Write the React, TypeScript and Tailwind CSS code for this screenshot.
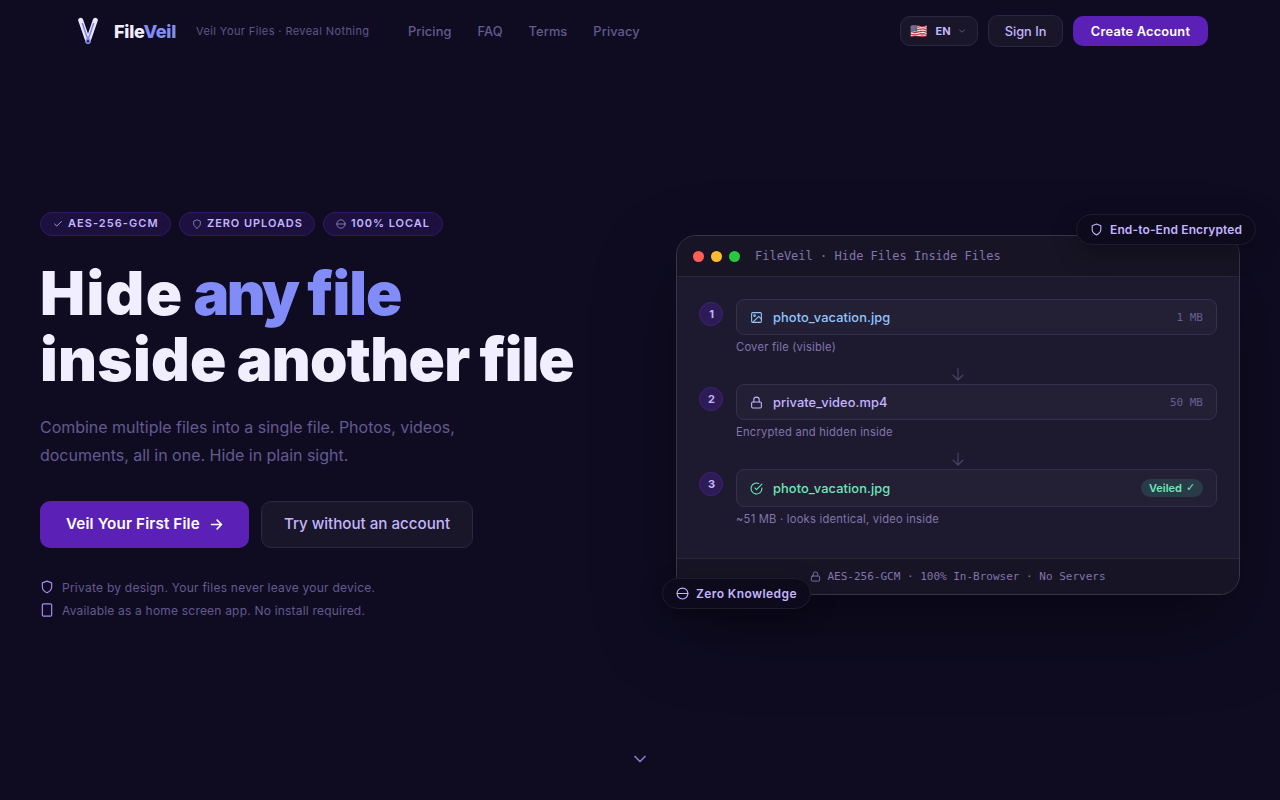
import type { ReactNode } from "react";

type GlyphProps = { className?: string; width?: number };

function Glyph({ className = "", width = 2, children }: GlyphProps & { children: ReactNode }) {
  return (
    <svg viewBox="0 0 24 24" fill="none" stroke="currentColor" strokeWidth={width} strokeLinecap="round" strokeLinejoin="round" className={`shrink-0 ${className}`}>
      {children}
    </svg>
  );
}

const Shield = (p: GlyphProps) => (
  <Glyph {...p}><path d="M12 22s8-4 8-10V5l-8-3-8 3v7c0 6 8 10 8 10z" /></Glyph>
);
const Disc = (p: GlyphProps) => (
  <Glyph {...p}><circle cx="12" cy="12" r="10" /><path d="M2 12h20" /></Glyph>
);
const Lock = (p: GlyphProps) => (
  <Glyph {...p}><rect x="3" y="11" width="18" height="11" rx="2" /><path d="M7 11V7a5 5 0 0 1 10 0v4" /></Glyph>
);
const Check = (p: GlyphProps) => (
  <Glyph {...p}><path d="M20 6 9 17l-5-5" /></Glyph>
);
const Chevron = (p: GlyphProps) => (
  <Glyph {...p}><path d="m6 9 6 6 6-6" /></Glyph>
);
const Picture = (p: GlyphProps) => (
  <Glyph {...p}><rect x="3" y="3" width="18" height="18" rx="2" /><circle cx="8.5" cy="8.5" r="1.5" /><path d="m21 15-5-5L5 21" /></Glyph>
);
const CheckCircle = (p: GlyphProps) => (
  <Glyph {...p}><path d="M22 11.08V12a10 10 0 1 1-5.93-9.14" /><path d="M22 4 12 14.01l-3-3" /></Glyph>
);

function Logo() {
  return (
    <svg viewBox="0 0 32 32" fill="none" strokeLinecap="round" strokeLinejoin="round" className="size-8">
      <path d="M8.7 5.3 16 26.3 23.3 5.3" stroke="#ebe7ff" strokeWidth="5" />
      <path d="M10.4 8.5 16 25 21.6 8.5" stroke="#8589ee" strokeWidth="1.6" />
      <circle cx="16" cy="26.3" r="2" fill="#29235c" stroke="#8187f2" strokeWidth="1.4" />
    </svg>
  );
}

function Header() {
  return (
    <header className="flex h-[62px] items-center px-[72px]">
      <Logo />
      <div className="ml-[10px] w-[82px] text-[18px] font-extrabold tracking-[-0.25px] text-[#f0eeff]">
        File<span className="text-[#818cf8]">Veil</span>
      </div>
      <div className="w-[212px] text-[11px] tracking-[0.4px] whitespace-nowrap text-[#5f5687]">Veil Your Files · Reveal Nothing</div>
      <nav className="flex gap-[26px] pt-px text-[12.8px] font-medium tracking-[0.1px] text-[#635a8f]">
        <a>Pricing</a>
        <a>FAQ</a>
        <a>Terms</a>
        <a>Privacy</a>
      </nav>
      <div className="ml-auto flex items-center gap-[10px]">
        <button className="flex h-[30px] w-[78px] items-center rounded-[10px] border border-[#2b2740] bg-[#191629] pl-[7px] text-[11px] font-bold text-[#c4b5fd]">
          <span className="w-[21px] text-[14px] leading-none">🇺🇸</span>
          <span className="w-[28px]">EN</span>
          <Chevron className="size-[10px] text-[#6b6290]" />
        </button>
        <button className="h-8 w-[75px] rounded-[10px] border border-[#2b2740] bg-[#191629] pt-px text-[12.8px] font-medium text-[#c4b5fd]">Sign In</button>
        <button className="h-[30px] w-[135px] rounded-[10px] bg-[#5b21b6] pt-px text-[12.8px] font-semibold tracking-[0.2px] text-white">Create Account</button>
      </div>
    </header>
  );
}

function Pill({ icon, label, className }: { icon: ReactNode; label: string; className: string }) {
  return (
    <span className={`flex h-6 items-center gap-[5px] rounded-full border border-[#341864] bg-[#1c103f] pl-3 text-[11px] font-semibold whitespace-nowrap text-[#c4b5fd] ${className}`}>
      {icon}
      {label}
    </span>
  );
}

function Intro() {
  return (
    <section className="w-[564px] shrink-0 pt-[3px]">
      <div className="flex gap-2">
        <Pill className="w-[131px] tracking-[1.05px]" icon={<Check className="size-[10px]" />} label="AES-256-GCM" />
        <Pill className="w-[136px] tracking-[0.95px]" icon={<Shield className="size-[10px] text-[#9287be]" />} label="ZERO UPLOADS" />
        <Pill className="w-[120px] tracking-[0.95px]" icon={<Disc className="size-[10px] text-[#9287be]" />} label="100% LOCAL" />
      </div>
      <h1 className="mt-6 pb-px text-[60px] leading-[66px] font-black tracking-[-1px] [word-spacing:-1px] whitespace-nowrap text-[#f0eeff]">
        <span className="tracking-[1.4px]">Hide</span>{" "}
        <span className="text-[#818cf8]"><span className="tracking-[-2.6px]">any</span> file</span>
        <br />
        <span className="tracking-[0.3px]">inside</span> <span className="tracking-[-0.7px]">another</span> file
      </h1>
      <p className="mt-5 w-[440px] text-[16px] leading-[28px] tracking-[-0.02px] text-[#635a8f]">
        Combine multiple files into a single file. Photos, videos, documents, all in one. Hide in plain sight.
      </p>
      <div className="mt-8 flex gap-3 text-[15.2px]">
        <button className="flex h-[47px] w-[209px] items-center gap-[9px] rounded-[10px] bg-[#5b21b6] pt-px pl-[26px] font-semibold tracking-[0.14px] whitespace-nowrap text-white">
          Veil Your First File
          <Glyph className="mb-px size-[15px]" width={2.5}><path d="M4 12h16M13 5l7 7-7 7" /></Glyph>
        </button>
        <button className="h-[47px] w-[212px] rounded-[10px] border border-[#2b2740] bg-[#191629] pt-px font-medium tracking-[-0.03px] whitespace-nowrap text-[#c4b5fd]">Try without an account</button>
      </div>
      <ul className="mt-7 text-[12px] leading-[23px] text-[#635a8f]">
        <li className="flex items-center gap-2 tracking-[0.25px]">
          <Shield className="mb-px size-[14px] text-[#a78bfa]" />
          Private by design. Your files never leave your device.
        </li>
        <li className="flex items-center gap-2 tracking-[0.2px]">
          <Glyph className="mb-px size-[14px] text-[#a78bfa]"><rect x="4" y="1.5" width="16" height="21" rx="2" /></Glyph>
          Available as a home screen app. No install required.
        </li>
      </ul>
    </section>
  );
}

type StepProps = {
  n: number;
  icon: ReactNode;
  name: string;
  color: string;
  note: string;
  trailing: ReactNode;
  tall?: boolean;
};

function Step({ n, icon, name, color, note, trailing, tall = false }: StepProps) {
  return (
    <div className="flex gap-[13px]">
      <div className="mt-[3px] flex size-6 shrink-0 items-center justify-center rounded-full border border-[#41217c] bg-[#2c1b55] pl-px text-[11px] font-bold text-[#c4b5fd]">{n}</div>
      <div className="flex-1">
        <div className={`flex items-center rounded-lg border bg-[#232036] px-[13px] ${tall ? "h-[38px] border-[#303348]" : "h-9 border-[#363148]"} ${color}`}>
          {icon}
          <span className="ml-[10px] pt-px text-[12.8px] font-medium tracking-[0.1px]">{name}</span>
          <span className="ml-auto flex items-center">{trailing}</span>
        </div>
        <p className="mt-1 text-[11.2px] leading-4 tracking-[0.22px] text-[#8175ab]">{note}</p>
      </div>
    </div>
  );
}

function DownArrow() {
  return (
    <div className="flex h-[29px] items-end justify-center pb-[2px] text-[#4b4566]">
      <Glyph className="size-4" width={1.6}><path d="M12 3v18M4.5 13.5 12 21l7.5-7.5" /></Glyph>
    </div>
  );
}

const size = "pt-[2px] font-['DejaVu_Sans_Mono',monospace] text-[11px] text-[#6a5f93]";

function Demo() {
  return (
    <section className="relative h-[360px] w-[564px] shrink-0">
      <div className="flex h-full flex-col overflow-hidden rounded-[20px] border border-[#393548] bg-[#1d1a2f] shadow-[0_32px_80px_rgba(0,0,0,0.4)]">
        <div className="flex h-[41px] shrink-0 items-center gap-[7px] border-b border-[#2b273b] bg-[#171425] px-4">
          <i className="size-[11px] rounded-full bg-[#ff5f57]" />
          <i className="size-[11px] rounded-full bg-[#febc2e]" />
          <i className="size-[11px] rounded-full bg-[#28c840]" />
          <span className="ml-2 font-['DejaVu_Sans_Mono',monospace] text-[12px] text-[#8175ab]">FileVeil · Hide Files Inside Files</span>
        </div>
        <div className="flex-1 px-[22px] pt-[22px]">
          <Step n={1} icon={<Picture className="size-[13px]" />} name="photo_vacation.jpg" color="text-[#93c5fd]" note="Cover file (visible)" trailing={<span className={size}>1 MB</span>} />
          <DownArrow />
          <Step n={2} icon={<Lock className="size-[13px]" />} name="private_video.mp4" color="text-[#c4b5fd]" note="Encrypted and hidden inside" trailing={<span className={size}>50 MB</span>} />
          <DownArrow />
          <Step
            n={3}
            tall
            icon={<CheckCircle className="size-[13px]" />}
            name="photo_vacation.jpg"
            color="text-[#6ee7b7]"
            note="~51 MB · looks identical, video inside"
            trailing={
              <span className="flex h-[18px] w-[62px] items-center justify-center gap-1 rounded-full bg-[#2a3b48] text-[11px] font-semibold whitespace-nowrap">
                Veiled <span className="font-['DejaVu_Sans',sans-serif]">✓</span>
              </span>
            }
          />
        </div>
        <div className="flex h-9 shrink-0 items-center justify-center gap-[6px] border-t border-[#2b273b] bg-[#171425] font-['DejaVu_Sans_Mono',monospace] text-[11px] text-[#8175ab]">
          <Lock className="size-[11px]" />
          <span className="pt-px">AES-256-GCM · 100% In-Browser · No Servers</span>
        </div>
      </div>
      <div className="absolute -top-[21px] -right-4 flex h-[31px] w-[180px] items-center gap-[7px] rounded-full border border-[#1f1b31] bg-[#0d0a1c] pl-[13px] text-[12px] font-semibold tracking-[0.13px] whitespace-nowrap text-[#c4b5fd] shadow-[0_8px_24px_rgba(0,0,0,0.3)]">
        <Shield className="size-[13px]" />
        End-to-End Encrypted
      </div>
      <div className="absolute -bottom-[14px] -left-[14px] flex h-[31px] w-[149px] items-center gap-[7px] rounded-full border border-[#1f1b31] bg-[#0d0a1c] pl-[13px] text-[12px] font-semibold tracking-[0.42px] whitespace-nowrap text-[#c4b5fd] shadow-[0_8px_24px_rgba(0,0,0,0.3)]">
        <Disc className="size-[13px]" />
        Zero Knowledge
      </div>
    </section>
  );
}

export default function App() {
  return (
    <div className="flex h-[800px] w-full flex-col overflow-hidden bg-[#0f0c22] font-['Inter',sans-serif]">
      <Header />
      <main className="flex h-[706px] items-center justify-between px-10">
        <Intro />
        <Demo />
      </main>
      <div className="-mt-[19px] flex justify-center">
        <Chevron className="size-5 text-[#8a7bd0]" />
      </div>
    </div>
  );
}
